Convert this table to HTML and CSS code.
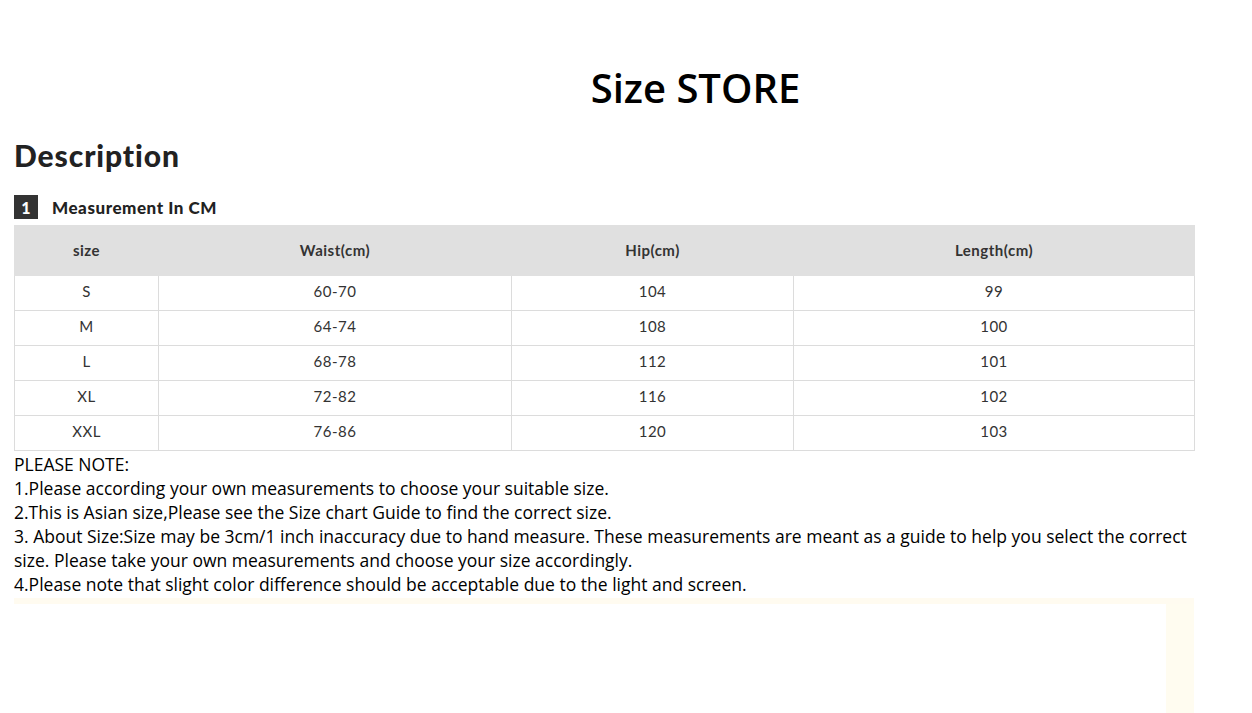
FILE: index.html
```html
<!DOCTYPE html>
<html>
<head>
<meta charset="utf-8">
<link rel="stylesheet" href="styles.css">
</head>
<body>
<div class="page">
  <header class="banner">
    <h1 class="store-title">Size STORE</h1>
  </header>
  <h2 class="desc-title">Description</h2>
  <div class="section-head">
    <span class="num">1</span>
    <span class="section-label">Measurement In CM</span>
  </div>
  <table class="size-table">
    <colgroup>
      <col class="c1"><col class="c2"><col class="c3"><col class="c4">
    </colgroup>
    <thead>
      <tr><th>size</th><th>Waist(cm)</th><th>Hip(cm)</th><th>Length(cm)</th></tr>
    </thead>
    <tbody>
      <tr><td>S</td><td>60-70</td><td>104</td><td>99</td></tr>
      <tr><td>M</td><td>64-74</td><td>108</td><td>100</td></tr>
      <tr><td>L</td><td>68-78</td><td>112</td><td>101</td></tr>
      <tr><td>XL</td><td>72-82</td><td>116</td><td>102</td></tr>
      <tr><td>XXL</td><td>76-86</td><td>120</td><td>103</td></tr>
    </tbody>
  </table>
  <div class="notes">
    <p>PLEASE NOTE:</p>
    <p>1.Please according your own measurements to choose your suitable size.</p>
    <p>2.This is Asian size,Please see the Size chart Guide to find the correct size.</p>
    <p>3. About Size:Size may be 3cm/1 inch inaccuracy due to hand measure. These measurements are meant as a guide to help you select the correct size. Please take your own measurements and choose your size accordingly.</p>
    <p>4.Please note that slight color difference should be acceptable due to the light and screen.</p>
  </div>
  <div class="image-area">
    <div class="image-edge"></div>
  </div>
</div>
</body>
</html>
```

FILE: styles.css
```css
* { box-sizing: border-box; }
html, body { margin: 0; padding: 0; background: #fff; }
body { overflow: hidden; }
.page {
  width: 1252px;
  height: 713px;
  padding: 0 0 0 14px;
}
.banner {
  height: 125px;
  display: flex;
  justify-content: center;
  padding-top: 62px;
  padding-left: 125px;
}
.store-title {
  margin: 0;
  font-family: "Open Sans", sans-serif;
  font-weight: 600;
  font-size: 40px;
  line-height: 52px;
  color: #000;
}
.desc-title {
  margin: 12px 0 0;
  font-family: Lato, sans-serif;
  font-weight: 900;
  font-size: 30px;
  letter-spacing: 0.9px;
  line-height: 36px;
  color: #222;
}
.section-head {
  display: flex;
  align-items: center;
  gap: 14px;
  margin-top: 22px;
  height: 24px;
}
.num {
  width: 24px;
  height: 24px;
  background: #333;
  color: #fff;
  font-family: Lato, sans-serif;
  font-weight: 900;
  font-size: 16px;
  display: flex;
  align-items: center;
  justify-content: center;
}
.section-label {
  font-family: Lato, sans-serif;
  font-weight: 900;
  font-size: 17px;
  letter-spacing: 0.55px;
  color: #222;
}
.size-table {
  margin-top: 6px;
  width: 1180px;
  border-collapse: collapse;
  table-layout: fixed;
  font-family: Lato, sans-serif;
  font-size: 15px;
  letter-spacing: 0.5px;
  color: #333;
}
.c1 { width: 144px; }
.c2 { width: 353px; }
.c3 { width: 282px; }
.c4 { width: 401px; }
.size-table th {
  height: 50px;
  background: #e0e0e0;
  font-weight: 700;
  text-align: center;
  padding: 0 0 2px;
  border: 1px solid #e0e0e0;
}
.size-table td {
  height: 35px;
  text-align: center;
  padding: 0 0 4px;
  border: 1px solid #dcdcdc;
}
.notes {
  margin-top: 1px;
  font-family: "Open Sans", sans-serif;
  font-size: 17.5px;
  line-height: 24px;
  color: #000;
  width: 1185px;
}
.notes p { margin: 0; }
.image-area {
  margin-top: 2px;
  width: 1180px;
  height: 130px;
  background: #fff;
  border-top: 6px solid #fffbf0;
  display: flex;
  justify-content: flex-end;
}
.image-edge {
  width: 28px;
  background: #fffcf0;
}
```
